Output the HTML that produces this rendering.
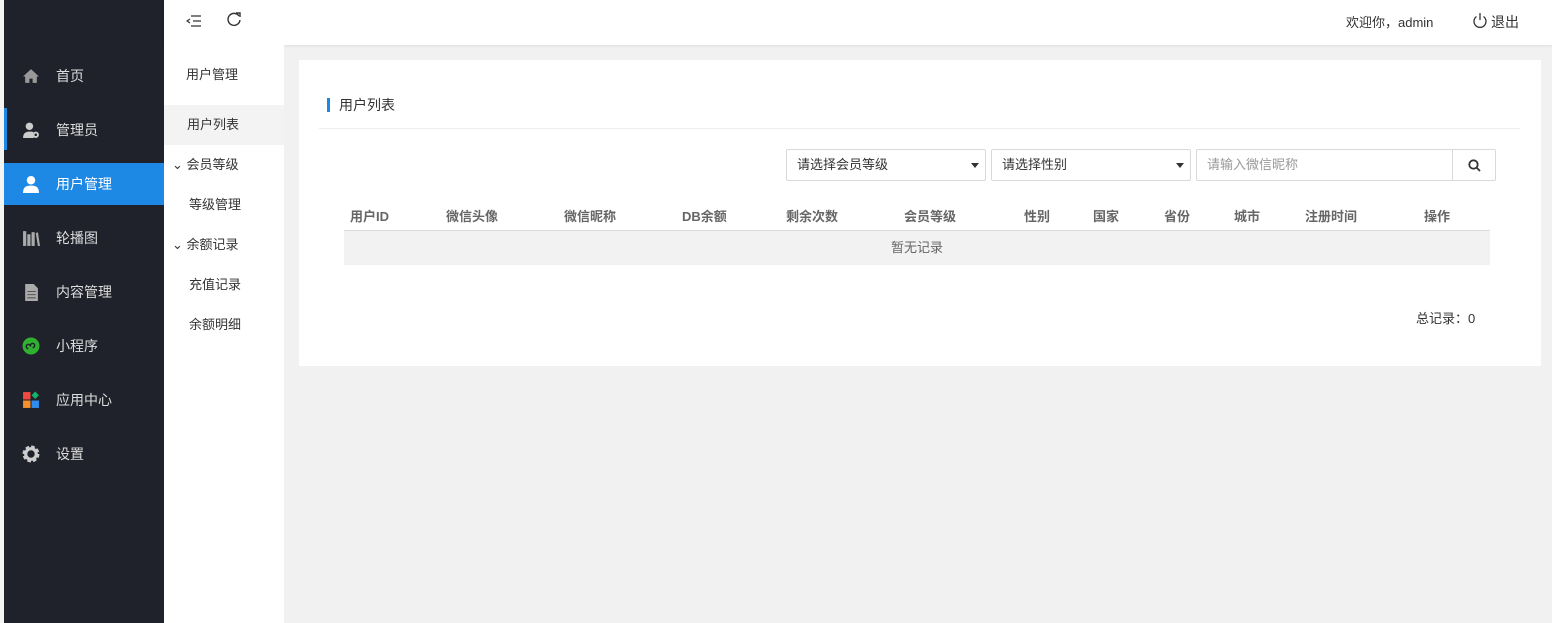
<!DOCTYPE html><html><head><meta charset="utf-8"><style>
*{margin:0;padding:0;box-sizing:border-box}
body{width:1552px;height:623px;overflow:hidden;background:#f1f1f1;font-family:"Liberation Sans","Noto Sans CJK SC",sans-serif;font-size:14px;color:#333;position:relative}
.side{position:absolute;left:4px;top:0;width:160px;height:623px;background:#1f222b}
.edge{position:absolute;left:0;top:0;width:4px;height:623px;background:#f4f4f4}
.mi{position:absolute;left:0;width:160px;height:42px;line-height:42px;color:#ddd;font-size:14px}
.mi span{position:absolute;left:52px}
.mi .ic{position:absolute;left:18px;top:12px;width:18px;height:18px}
.act{background:#1e88e5;color:#fff}
.top{position:absolute;left:164px;top:0;width:1388px;height:45px;background:#fff;box-shadow:0 1px 3px rgba(0,0,0,.08)}
.sub{position:absolute;left:164px;top:45px;width:120px;height:578px;background:#fff}
.si{position:absolute;left:0;width:120px;height:40px;line-height:40px;font-size:13px;color:#333}
.card{position:absolute;left:299px;top:60px;width:1242px;height:306px;background:#fff}
.sel{position:absolute;top:89px;height:32px;border:1px solid #d9d9d9;border-radius:2px;line-height:30px;padding-left:10px;font-size:13px;color:#333}
.sel i{position:absolute;right:6px;top:13px;border:4px solid transparent;border-top:5px solid #333}
.th{position:absolute;top:146px;font-size:13px;font-weight:bold;color:#666}
</style></head><body>
<div class="edge"></div>
<div class="side">
<div style="position:absolute;left:0;top:108px;width:3px;height:42px;background:#1e88e5"></div>
<div class="mi" style="top:55px"><svg class="ic" viewBox="0 0 17 17"><path d="M8.5 2L1 9h2v6h4v-4h3v4h4V9h2z" fill="#999"/></svg><span>首页</span></div>
<div class="mi" style="top:109px"><svg class="ic" viewBox="0 0 17 17"><circle cx="7" cy="5" r="3.5" fill="#ccc"/><path d="M1 16c0-5 3-6 6-6s3 0 4 1v5z" fill="#ccc"/><circle cx="13" cy="13" r="3" fill="#ccc"/><circle cx="13" cy="13" r="1.2" fill="#1f222b"/></svg><span>管理员</span></div>
<div class="mi act" style="top:163px"><svg class="ic" viewBox="0 0 17 17"><circle cx="8.5" cy="5" r="4" fill="#fff"/><path d="M1 17c0-6 3-7 7.5-7s7.5 1 7.5 7z" fill="#fff"/></svg><span>用户管理</span></div>
<div class="mi" style="top:217px"><svg class="ic" viewBox="0 0 17 17"><rect x="1" y="2" width="3" height="14" fill="#aaa"/><rect x="5" y="5" width="3" height="11" fill="#aaa"/><rect x="9" y="3" width="3" height="13" fill="#aaa"/><path d="M13 4l2-1 2 13h-2z" fill="#aaa"/></svg><span>轮播图</span></div>
<div class="mi" style="top:271px"><svg class="ic" viewBox="0 0 17 17"><path d="M3 1h8l4 4v12H3z" fill="#aaa"/><path d="M5 8h8M5 11h8M5 14h8" stroke="#555" stroke-width="1"/></svg><span>内容管理</span></div>
<div class="mi" style="top:325px"><svg class="ic" viewBox="0 0 17 17"><circle cx="8.5" cy="8.5" r="8" fill="#2fb12f"/><path d="M6 11a2 2 0 1 1 2-2v-1a2 2 0 1 1 2 2" stroke="#1f222b" stroke-width="1.4" fill="none"/></svg><span>小程序</span></div>
<div class="mi" style="top:379px"><svg class="ic" viewBox="0 0 17 17"><rect x="1" y="1" width="7" height="7" fill="#f04a3e"/><rect x="1" y="9" width="7" height="7" fill="#f7902b"/><rect x="9" y="9" width="7" height="7" fill="#2f8df0"/><path d="M12.5 0.5l3.5 3.5-3.5 3.5-3.5-3.5z" fill="#17b26a"/></svg><span>应用中心</span></div>
<div class="mi" style="top:433px"><svg class="ic" viewBox="0 0 17 17"><circle cx="8.5" cy="8.5" r="6" fill="none" stroke="#ccc" stroke-width="4" stroke-dasharray="3 1.7"/><circle cx="8.5" cy="8.5" r="5" fill="none" stroke="#ccc" stroke-width="3"/></svg><span>设置</span></div>
</div>
<div class="top">
<svg style="position:absolute;left:22px;top:13px" width="16" height="16" viewBox="0 0 16 16"><path d="M5 3h10M7 8h8M5 13h10M4 6L1 8l3 2" stroke="#333" stroke-width="1.2" fill="none"/></svg>
<svg style="position:absolute;left:62px;top:11px" width="16" height="16" viewBox="0 0 16 16"><path d="M13 5A6 6 0 1 0 14 9" stroke="#333" stroke-width="1.4" fill="none"/><path d="M10 2l4 0 0 4" stroke="#333" stroke-width="1.4" fill="none"/></svg>
<div style="position:absolute;left:1182px;top:12px;font-size:13px">欢迎你，admin</div>
<svg style="position:absolute;left:1308px;top:12px" width="16" height="17" viewBox="0 0 16 17"><path d="M4.5 4.5a6 6 0 1 0 7 0" stroke="#333" stroke-width="1.3" fill="none"/><path d="M8 1v7" stroke="#333" stroke-width="1.3"/></svg>
<div style="position:absolute;left:1327px;top:12px;font-size:14px">退出</div>
</div>
<div class="sub">
<div class="si" style="top:10px;left:22px">用户管理</div>
<div class="si" style="top:60px;background:#f3f3f3;padding-left:23px">用户列表</div>
<div class="si" style="top:100px;padding-left:8px">⌄ 会员等级</div>
<div class="si" style="top:140px;padding-left:25px">等级管理</div>
<div class="si" style="top:180px;padding-left:8px">⌄ 余额记录</div>
<div class="si" style="top:220px;padding-left:25px">充值记录</div>
<div class="si" style="top:260px;padding-left:25px">余额明细</div>
</div>
<div class="card">
<div style="position:absolute;left:28px;top:38px;width:3px;height:14px;background:#1e88e5"></div>
<div style="position:absolute;left:40px;top:35px;font-size:14px">用户列表</div>
<div style="position:absolute;left:20px;top:68px;width:1201px;height:1px;background:#eee"></div>
<div class="sel" style="left:487px;width:200px">请选择会员等级<i></i></div>
<div class="sel" style="left:692px;width:200px">请选择性别<i></i></div>
<div class="sel" style="left:897px;width:300px;color:#999">请输入微信昵称
<div style="position:absolute;right:0;top:0;width:43px;height:30px;border-left:1px solid #d9d9d9"><svg style="position:absolute;left:15px;top:9px" width="13" height="13" viewBox="0 0 13 13"><circle cx="5.5" cy="5.5" r="4.2" stroke="#333" stroke-width="1.8" fill="none"/><path d="M8.5 8.5l3.5 3.5" stroke="#333" stroke-width="1.8"/></svg></div></div>
<div style="position:absolute;left:45px;top:170px;width:1146px;height:1px;background:#ddd"></div>
<div style="position:absolute;left:45px;top:171px;width:1146px;height:34px;background:#f2f2f2;text-align:center;line-height:34px;font-size:13px;color:#666">暂无记录</div>
<div class="th" style="left:51px">用户ID</div><div class="th" style="left:147px">微信头像</div><div class="th" style="left:265px">微信昵称</div><div class="th" style="left:383px">DB余额</div><div class="th" style="left:487px">剩余次数</div><div class="th" style="left:605px">会员等级</div><div class="th" style="left:725px">性别</div><div class="th" style="left:794px">国家</div><div class="th" style="left:865px">省份</div><div class="th" style="left:935px">城市</div><div class="th" style="left:1006px">注册时间</div><div class="th" style="left:1125px">操作</div>
<div style="position:absolute;left:1117px;top:248px;font-size:13px">总记录：0</div>
</div>
</body></html>
